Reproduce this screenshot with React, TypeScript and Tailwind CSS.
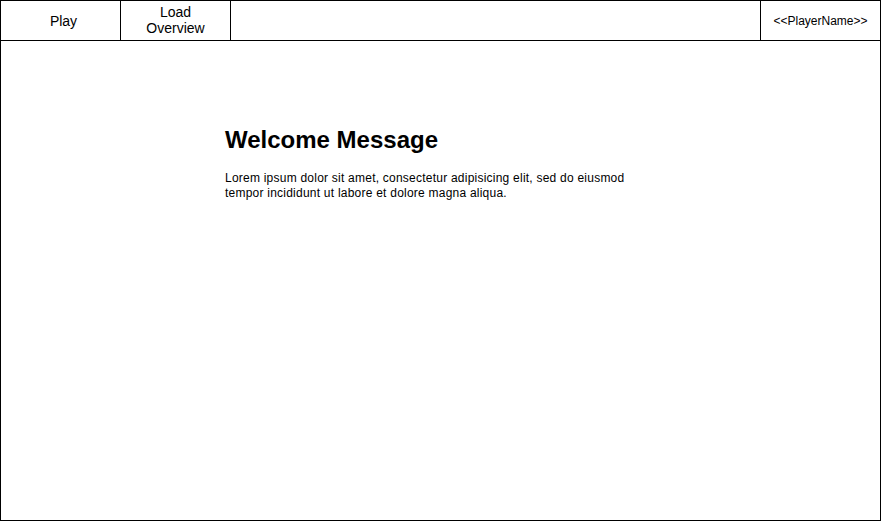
import React from 'react';

const App: React.FC = () => {
  return (
    <div className="w-[881px] h-[521px] bg-white border border-black flex flex-col text-black font-['Liberation_Sans',Arial,sans-serif]">
      {/* Top navigation */}
      <div className="h-[40px] flex border-b border-black">
        <div className="w-[120px] border-r border-black flex items-center justify-center pl-[6px] text-[14px] leading-[16px]">
          Play
        </div>
        <div className="w-[110px] border-r border-black flex items-center justify-center text-center text-[14px] leading-[16px] pb-px">
          Load
          <br />
          Overview
        </div>
        <div className="flex-1" />
        <div className="w-[120px] border-l border-black flex items-center justify-center text-[12px]">
          &lt;&lt;PlayerName&gt;&gt;
        </div>
      </div>

      {/* Content */}
      <div className="flex-1 pt-[85px] pl-[224px]">
        <h1 className="text-[24px] leading-[28px] font-bold">Welcome Message</h1>
        <p className="mt-[17px] text-[12px] leading-[15px] tracking-[0.23px]">
          Lorem ipsum dolor sit amet, consectetur adipisicing elit, sed do eiusmod
          <br />
          tempor incididunt ut labore et dolore magna aliqua.
        </p>
      </div>
    </div>
  );
};

export default App;
